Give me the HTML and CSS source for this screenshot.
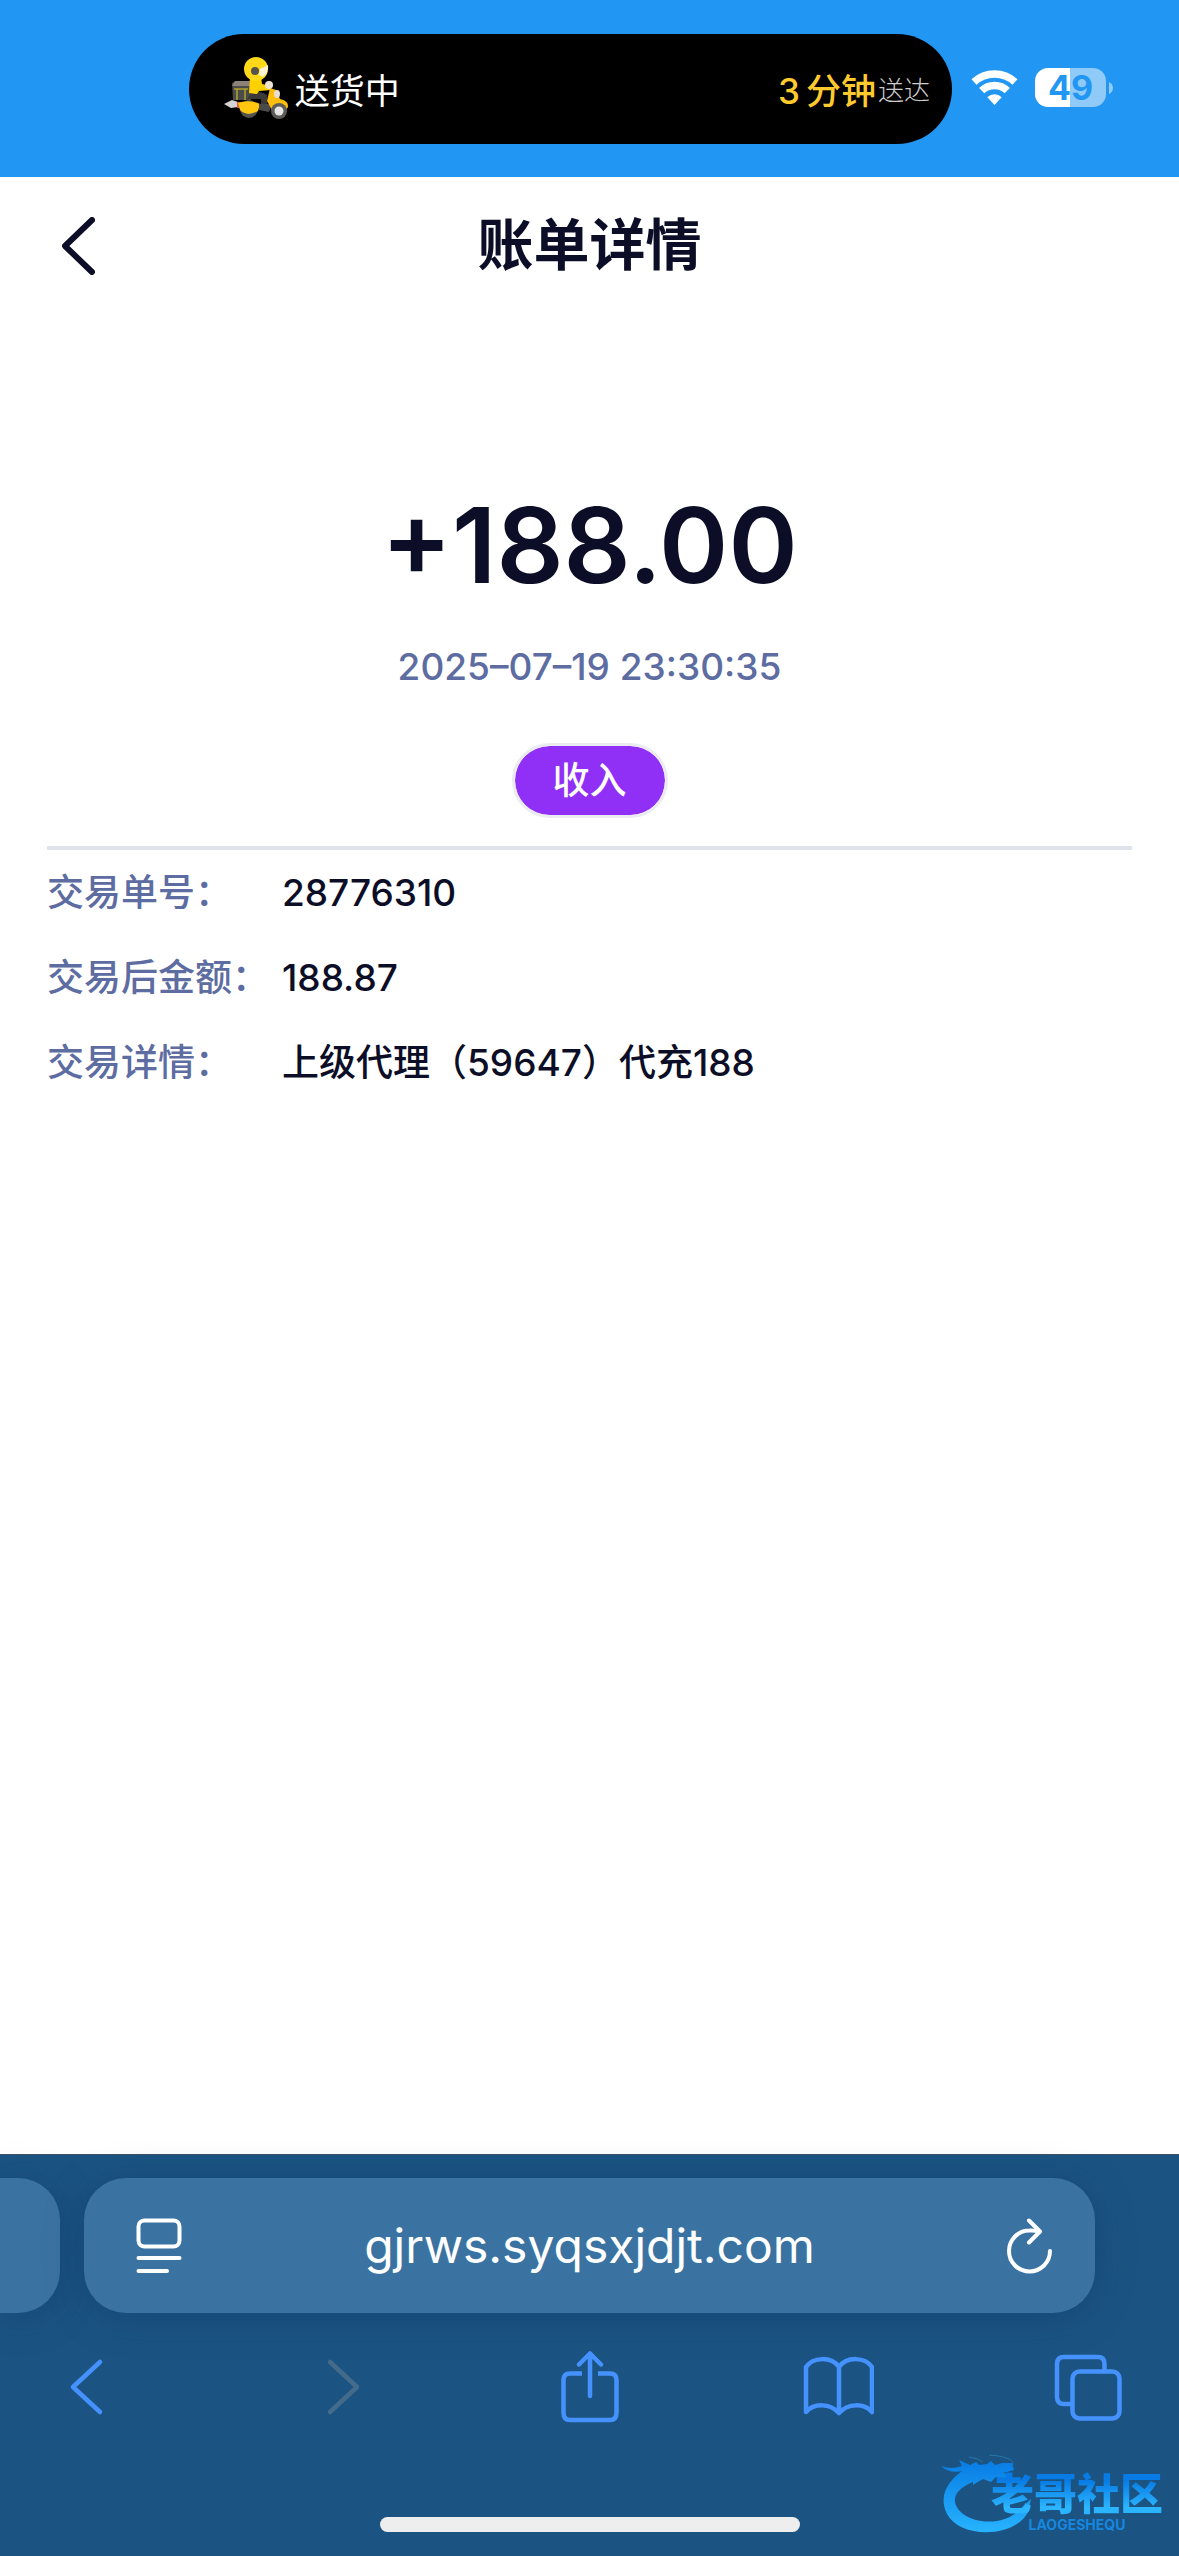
FILE: index.html
```html
<!DOCTYPE html>
<html lang="zh-CN">
<head>
<meta charset="utf-8">
<meta name="viewport" content="width=device-width, initial-scale=1">
<title>账单详情</title>
<link rel="stylesheet" href="styles.css">
</head>
<body>
<header class="status">
  <div class="island">
    <svg class="rider" viewBox="0 0 66 62" aria-hidden="true">
      <path d="M1 47 L9 43 L15 45 L15 50 L8 51 Z" fill="#d4d4d4"/>
      <path d="M14 45h4v6h-4z" fill="#d8574a"/>
      <circle cx="26" cy="52" r="9" fill="#55534c"/><circle cx="26" cy="52" r="4.500" fill="#e4e4e4"/>
      <path d="M9 26 L13 24 H28 V43 H10 Z" fill="#4b4c49"/>
      <path d="M9 29 L12 24 H27 L28 29 Z" fill="#8d8279"/>
      <path d="M11 32H25M14 32V43M22 32V43" stroke="#b3a12b" stroke-width="1.500"/>
      <path d="M15 46 Q25 42 37 47 L35 54 Q24 60 17 53 Z" fill="#ffc70d"/>
      <path d="M28 36 Q38 33 44 38 V48 H38 V42 L24 42 Z" fill="#3b3a38"/>
      <path d="M27 20 L38 19 L39 27 L48 29 V33 L36 34 L34 37 L26 36 Z" fill="#fdd000"/>
      <path d="M36 47 L49 47 L46 55 L36 53 Z" fill="#4a4a48"/>
      <path d="M47 31 L53 33 L57 42 Q66 44 65 50 L63 53 Q56 45 49 53 L44 44 Z" fill="#ffbe0a"/>
      <circle cx="56" cy="54" r="8" fill="#5c5b57"/><circle cx="56" cy="54" r="4.500" fill="#e6e6e6"/>
      <circle cx="46" cy="28" r="4" fill="#efe4cf"/>
      <ellipse cx="54" cy="37" rx="3" ry="4" fill="#e8dfd0"/>
      <circle cx="33" cy="12" r="12" fill="#ffd917"/>
      <path d="M37 12 L45 8 Q46 15 40 20 L36 18 Z" fill="#fff2d4"/>
      <circle cx="32" cy="14" r="4" fill="#55534c"/>
    </svg>
    <span class="delivery">送货中</span>
    <span class="eta"><span>3</span><span>分钟</span></span><span class="eta-note">送达</span>
  </div>
  <svg class="wifi" viewBox="0 0 47 35" role="img" aria-label="Wi-Fi">
    <g fill="none" stroke="#fff" stroke-width="7.500">
      <path d="M3 12 A30.300 30.300 0 0 1 44 12"/>
      <path d="M10.700 20.600 A18.500 18.500 0 0 1 36.300 20.600"/>
    </g>
    <path d="M16.300 27.300 A10 10 0 0 1 30.700 27.300 L23.500 35 Z" fill="#fff"/>
  </svg>
  <div class="battery"><span class="battery-level">49</span><svg class="battery-tip" viewBox="0 0 4 12" aria-hidden="true"><path d="M0 0 Q4 2 4 6 Q4 10 0 12 Z" fill="#90caf9"/></svg></div>
</header>

<main class="page">
  <div class="titlebar">
    <button class="back" type="button" aria-label="返回">
      <svg viewBox="0 0 33 58"><path d="M30 3 L3 29 L30 55" fill="none" stroke="#0b0e26" stroke-width="6" stroke-linecap="round" stroke-linejoin="round"/></svg>
    </button>
    <h1 class="title">账单详情</h1>
  </div>
  <section class="summary">
    <p class="amount">+188.00</p>
    <time class="date" datetime="2025-07-19T23:30:35">2025–07–19 23:30:35</time>
    <span class="tag">收入</span>
  </section>
  <dl class="details">
    <div class="row"><dt>交易单号：</dt><dd>28776310</dd></div>
    <div class="row"><dt>交易后金额：</dt><dd>188.87</dd></div>
    <div class="row"><dt>交易详情：</dt><dd>上级代理（59647）代充188</dd></div>
  </dl>
</main>

<footer class="browser">
  <div class="tabs">
    <div class="tab-previous"></div>
    <form class="address">
      <button class="address-button" type="button" aria-label="页面设置">
        <svg viewBox="0 0 46 56"><g fill="none" stroke="#fff" stroke-width="4" stroke-linecap="round"><rect x="2.500" y="2.500" width="41" height="26" rx="6"/><path d="M2.500 40H43.500M2.500 53H31"/></g></svg>
      </button>
      <input class="url" type="text" aria-label="网址" value="gjrws.syqsxjdjt.com">
      <button class="address-button" type="button" aria-label="刷新">
        <svg viewBox="0 0 46 56"><g fill="none" stroke="#fff" stroke-width="4" stroke-linecap="round" stroke-linejoin="round"><path d="M43 33 A20.500 20.500 0 1 1 22.500 12.500 Q28 12 32 14"/><path d="M22 2.500 L33 13.500 L22 24.500"/></g></svg>
      </button>
    </form>
  </div>
  <nav class="toolbar" aria-label="浏览器工具栏">
    <button class="tool" type="button" aria-label="后退"><svg viewBox="0 0 72 72"><path d="M50 11 L23 36 L50 61"/></svg></button>
    <button class="tool" type="button" aria-label="前进" disabled><svg viewBox="0 0 72 72"><path d="M29 11 L56 36 L29 61"/></svg></button>
    <button class="tool" type="button" aria-label="分享"><svg viewBox="0 0 72 72"><path d="M30 22.500 H18 Q11.500 22.500 11.500 29 V62 Q11.500 69 18 69 H58 Q64.500 69 64.500 62 V29 Q64.500 22.500 58 22.500 H46" stroke-linecap="butt"/><path d="M38 45 V3 M27 13.500 L38 2.500 L49 13.500"/></svg></button>
    <button class="tool" type="button" aria-label="书签"><svg viewBox="0 0 72 72"><path d="M37 16 C29 5 11 6 4 16 V61 C12 52 28 52 37 62 C46 52 62 52 70 61 V16 C63 6 45 5 37 16 V62"/></svg></button>
    <button class="tool" type="button" aria-label="标签页"><svg viewBox="0 0 72 72"><rect x="19.500" y="20.500" width="47" height="47" rx="7"/><path d="M51.500 19 V13 Q51.500 6 45 6 H11 Q4 6 4 13 V46 Q4 53 11 53 H18"/></svg></button>
  </nav>
  <div class="home-indicator"></div>
  <div class="watermark">
    <svg class="dragon" viewBox="0 0 92 80" aria-hidden="true">
      <defs><linearGradient id="scale" x1="0" y1="0" x2="0" y2="1"><stop offset="0" stop-color="#087ce4"/><stop offset="1" stop-color="#27b3ff"/></linearGradient></defs>
      <path fill="url(#scale)" d="M0 12 Q10 16 21 12 L18 6 L29 11 L35 8 L38 11 L46 10 L50 7 L54 11 L61 9 L71 9 L73 16 L62 19 L71 21 L70 26 L61 25 L55 23 L50 28 L42 25 L35 29 L32 31 L32 28 C20 33 13 39 14 48 C18 69 62 76 80 54 L90 45 L87 58 C75 83 20 86 6 60 C-4 40 10 25 21 17 Q9 20 0 12 Z"/>
      <path fill="none" stroke="#2775ad" stroke-width="1" d="M28 3 Q37 4 42 8 M48 1 Q61 2 65 4 Q73 6 72 11"/>
    </svg>
    <div class="brand"><span class="brand-name">老哥社区</span><span class="brand-latin">LAOGESHEQU</span></div>
  </div>
</footer>
</body>
</html>
```
FILE: styles.css
```css
* { box-sizing: border-box; }

body {
  margin: 0;
  min-height: 100vh;
  display: flex;
  flex-direction: column;
  background: #fff;
  color: #0b0e26;
  font-family: Inter, "Noto Sans CJK SC", sans-serif;
  font-size: 37px;
}

button, input {
  margin: 0;
  padding: 0;
  border: 0;
  background: none;
  color: inherit;
  font: inherit;
}

svg { display: block; }

/* Status bar */
.status {
  display: flex;
  align-items: flex-start;
  height: 177px;
  padding: 34px 66px 0 16%;
  background: #2196f3;
}

.island {
  flex: 1;
  display: flex;
  align-items: center;
  height: 110px;
  padding: 0 22px 2px 34px;
  border-radius: 55px;
  background: #000;
  color: #fff;
}

.rider { width: 66px; height: 62px; }

.delivery {
  flex: 1;
  margin-left: 6px;
  font-size: 35px;
}

.eta {
  display: flex;
  align-items: baseline;
  gap: 6px;
  color: #ffca2d;
  font-size: 35px;
  font-weight: 500;
}

.eta-note {
  margin-left: 2px;
  color: #ccc;
  font-size: 26px;
  font-weight: 300;
}

.wifi {
  width: 47px;
  height: 35px;
  margin: 36px 17px 0 19px;
}

.battery {
  display: flex;
  align-items: center;
  gap: 3px;
  margin-top: 34px;
}

.battery-level {
  width: 71px;
  border-radius: 13px;
  background: linear-gradient(to right, #fff 49%, #90caf9 49%);
  color: #2196f3;
  font-size: 34px;
  font-weight: 700;
  line-height: 39px;
  text-align: center;
}

.battery-tip { width: 4px; height: 12px; }

/* Bill */
.page { flex: 1; }

.titlebar {
  display: grid;
  grid-template-columns: 1fr auto 1fr;
  align-items: center;
  height: 137px;
  padding: 0 62px;
}

.back { justify-self: start; }
.back svg { width: 33px; height: 58px; }

.title {
  margin: 0;
  padding-bottom: 10px;
  font-size: 56px;
  font-weight: 700;
}

.summary {
  display: flex;
  flex-direction: column;
  align-items: center;
  margin: 0 47px;
  padding: 171px 0 28px;
  border-bottom: 4px solid #dfe2ed;
}

.amount {
  margin: 0;
  font-size: 105px;
  font-weight: 600;
  line-height: 120px;
}

.date {
  margin-top: 34px;
  color: #5d6ca1;
  font-weight: 500;
  line-height: 56px;
}

.tag {
  margin-top: 48px;
  padding: 0 38px;
  border: 3px solid #ebecf2;
  border-radius: 38px;
  background: #9030f7;
  background-clip: padding-box;
  color: #fff;
  font-weight: 500;
  line-height: 69px;
}

.details {
  margin: 0 47px;
  line-height: 85px;
}

.row { display: flex; font-weight: 500; }

.row dt {
  width: 235px;
  color: #5d6ca1;
  white-space: nowrap;
}

.row dd { margin: 0; }

/* Browser chrome */
.browser {
  position: relative;
  padding: 23px 0 24px;
  border-top: 1px solid #39536a;
  background: #1b5482;
}

.tabs {
  display: flex;
  gap: 24px;
  padding-right: 84px;
}

.tab-previous, .address {
  background: #3a73a2;
  box-shadow: 0 4px 40px rgba(0, 30, 90, 0.25);
}

.tab-previous {
  width: 60px;
  border-radius: 0 42px 42px 0;
}

.address {
  flex: 1;
  display: flex;
  align-items: center;
  height: 135px;
  padding: 0 42px 0 52px;
  border-radius: 42px;
}

.address-button svg { width: 46px; height: 56px; }

.url {
  flex: 1;
  min-width: 0;
  margin-right: 10px;
  color: #fff;
  font-size: 48px;
  line-height: 60px;
  text-align: center;
}

.toolbar {
  display: flex;
  justify-content: space-between;
  padding: 38px 54px 0 50px;
}

.tool svg {
  width: 72px;
  height: 72px;
  fill: none;
  stroke: #4592ff;
  stroke-width: 4.5px;
  stroke-linecap: round;
  stroke-linejoin: round;
}

.tool:disabled svg { stroke: #446b8b; }

.home-indicator {
  width: 420px;
  height: 15px;
  margin: 94px auto 0;
  border-radius: 8px;
  background: #eee;
}

.watermark {
  position: absolute;
  right: 16px;
  bottom: 22px;
  width: 222px;
  height: 80px;
}

.dragon { width: 92px; height: 80px; }

.brand {
  position: absolute;
  right: 0;
  bottom: 0;
  display: flex;
  flex-direction: column;
  align-items: center;
}

.brand-name {
  background: linear-gradient(#087ce4 20%, #2bb4ff 80%);
  background-clip: text;
  color: transparent;
  font-size: 43px;
  font-weight: 900;
  line-height: 44px;
}

.brand-latin {
  color: #1687df;
  font-size: 14px;
  font-weight: 700;
  line-height: 18px;
}
```
